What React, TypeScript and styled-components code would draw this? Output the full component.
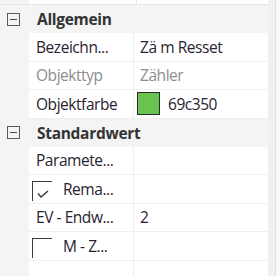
import React from "react";
import styled, { createGlobalStyle } from "styled-components";

const Global = createGlobalStyle`
  html, body { margin: 0; padding: 0; background: #ffffff; }
  body { font-family: "Open Sans", "Noto Sans", sans-serif; }
`;

const Frame = styled.div`
  width: 280px;
  height: 276px;
  overflow: hidden;
  display: flex;
  background: #f4f4f4;
`;

const Main = styled.div`
  width: 268px;
  display: flex;
  flex-direction: column;
`;

const ScrollTrack = styled.div`
  width: 7px;
  background: #f0f0f0;
  border-right: 1px solid #e2e2e2;
`;

const ScrollEdge = styled.div`
  flex: 1;
  background: #f9f9f9;
`;

const Stub = styled.div`
  height: 4px;
  flex: none;
  display: grid;
  grid-template-columns: 29px 108px 1fr;
  border-bottom: 1px solid #e6e6e6;
`;

const StubCell = styled.div<{ $divider?: boolean }>`
  background: #ffffff;
  border-right: ${(p) => (p.$divider ? "1px solid #e6e6e6" : "none")};
`;

const CategoryRow = styled.div`
  height: 28px;
  flex: none;
  display: flex;
  align-items: center;
  background: #f4f4f4;
`;

const Expander = styled.div`
  width: 11px;
  height: 11px;
  margin-left: 7px;
  border: 1px solid #5a5a5a;
  display: flex;
  align-items: center;
  justify-content: center;
  &::after {
    content: "";
    width: 7px;
    height: 1px;
    background: #4a4a4a;
  }
`;

const CategoryLabel = styled.span`
  margin-left: 17px;
  font-weight: 700;
  font-size: 15.5px;
  color: #333333;
  letter-spacing: -0.3px;
`;

const PropRow = styled.div`
  height: 28.5px;
  flex: none;
  display: grid;
  grid-template-columns: 29px 105px 1fr;
  background: #f4f4f4;
`;

const Cell = styled.div`
  background: #ffffff;
  border-bottom: 1px solid #efefef;
  display: flex;
  align-items: center;
  overflow: hidden;
  white-space: nowrap;
`;

const NameCell = styled(Cell)`
  border-right: 1px solid #efefef;
  padding-left: 7px;
`;

const ValueCell = styled(Cell)`
  padding-left: 6px;
`;

const Text = styled.span<{ $muted?: boolean }>`
  font-size: 15.5px;
  letter-spacing: -0.45px;
  color: ${(p) => (p.$muted ? "#8d8d8d" : "#2a2230")};
`;

const CheckBox = styled.div`
  width: 20px;
  height: 20px;
  margin-left: -4px;
  box-sizing: border-box;
  border-top: 1.5px solid #3c3c3c;
  border-left: 1.5px solid #3c3c3c;
  align-self: flex-start;
  margin-top: 6px;
  flex: none;
  position: relative;
  svg { position: absolute; left: 4px; top: 8px; }
`;

const CheckText = styled(Text)`
  margin-left: 11px;
`;

const Swatch = styled.div<{ $color: string }>`
  width: 21px;
  height: 21px;
  margin-left: -3px;
  border: 1px solid #2b2b2b;
  background: ${(p) => p.$color};
  flex: none;
`;

const SwatchText = styled(Text)`
  margin-left: 8px;
`;

const Gutter = styled.div``;

type Row = {
  name: string;
  value?: string;
  muted?: boolean;
  check?: boolean;
  color?: string;
};

const Prop: React.FC<Row> = ({ name, value, muted, check, color }) => (
  <PropRow>
    <Gutter />
    <NameCell>
      {check === undefined ? (
        <Text $muted={muted}>{name}</Text>
      ) : (
        <>
          <CheckBox>
            {check && (
              <svg width="12" height="9" viewBox="0 0 12 9">
                <polyline points="1,3.5 4,7 11,1" fill="none" stroke="#333" strokeWidth="1.4" />
              </svg>
            )}
          </CheckBox>
          <CheckText>{name}</CheckText>
        </>
      )}
    </NameCell>
    <ValueCell>
      {color && <Swatch $color={color} />}
      {value &&
        (color ? (
          <SwatchText>{value}</SwatchText>
        ) : (
          <Text $muted={muted}>{value}</Text>
        ))}
    </ValueCell>
  </PropRow>
);

export default function App() {
  return (
    <>
      <Global />
      <Frame>
        <Main>
          <Stub>
            <div />
            <StubCell $divider />
            <StubCell />
          </Stub>
          <CategoryRow>
            <Expander />
            <CategoryLabel>Allgemein</CategoryLabel>
          </CategoryRow>
          <Prop name="Bezeichn..." value="Zä m Resset" />
          <Prop name="Objekttyp" value="Zähler" muted />
          <Prop name="Objektfarbe" value="69c350" color="#69c350" />
          <CategoryRow>
            <Expander />
            <CategoryLabel>Standardwert</CategoryLabel>
          </CategoryRow>
          <Prop name="Paramete..." />
          <Prop name="Rema..." check={true} />
          <Prop name="EV - Endw..." value="2" />
          <Prop name="M - Z..." check={false} />
          <Prop name="" />
        </Main>
        <ScrollTrack />
        <ScrollEdge />
      </Frame>
    </>
  );
}
